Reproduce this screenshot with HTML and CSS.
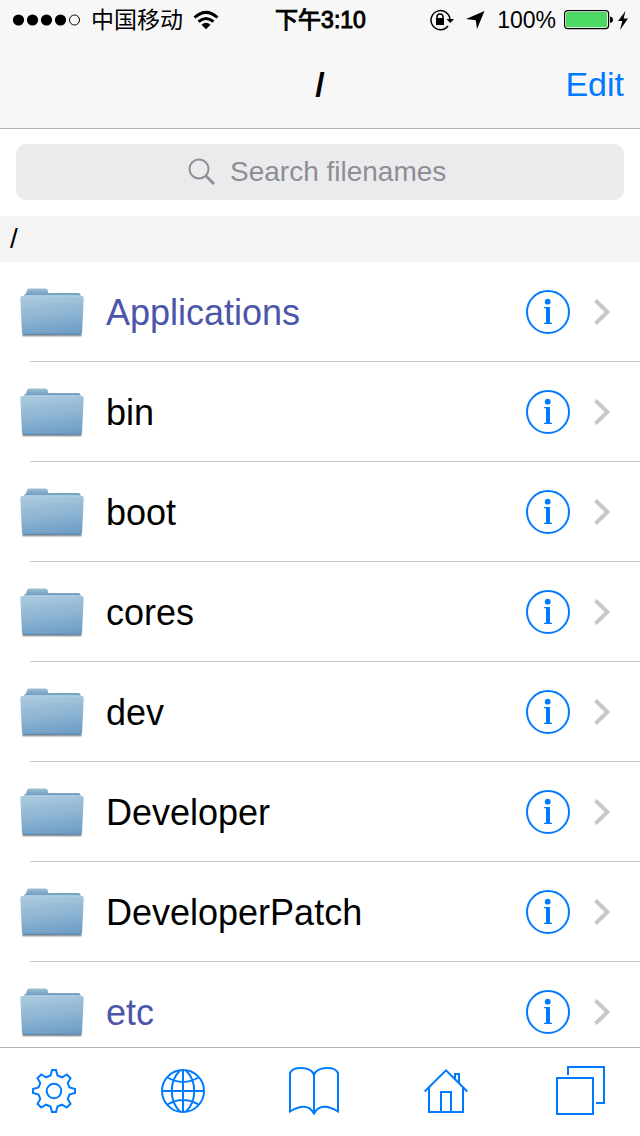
FILE: index.html
```html
<!DOCTYPE html>
<html lang="en">
<head>
<meta charset="utf-8">
<meta name="viewport" content="width=device-width">
<title>Files</title>
<link rel="stylesheet" href="styles.css">
</head>
<body>
<svg class="defs" aria-hidden="true">
  <defs>
    <linearGradient id="front" x1="0.3" y1="0" x2="0.5" y2="1">
      <stop offset="0" stop-color="#abcade"/>
      <stop offset="0.5" stop-color="#8fb5d3"/>
      <stop offset="1" stop-color="#6f9ec5"/>
    </linearGradient>
    <linearGradient id="back" x1="0" y1="0" x2="0" y2="1">
      <stop offset="0" stop-color="#9dbfd6"/>
      <stop offset="0.6" stop-color="#6d9cbd"/>
    </linearGradient>
  </defs>
  <symbol id="folder" viewBox="0 0 64 50">
    <path d="M2.500 47h59v2.500h-59z" fill="#8d8783" opacity=".8"/>
    <path d="M4 11V8l2-1.500 1-3.500q.5-1.500 2-1.500h16.500q2 0 2.300 2L28.300 6H59l1.500 1.500V13H4z" fill="url(#back)"/>
    <path d="M.3 11.500Q0 9 2 9h2l.5-1h55l.5 1h2q2 0 1.700 2.500L62 46q-.2 2-2 2H4q-1.800 0-2-2z" fill="url(#front)"/>
    <path d="M4 9.500h56" stroke="#b7d1e1" opacity=".5"/>
    <path d="M3 47.300h58" stroke="#5685aa"/>
  </symbol>
  <symbol id="info" viewBox="0 0 44 44">
    <circle cx="22" cy="22" r="21" fill="none" stroke="#007aff" stroke-width="2"/>
    <circle cx="21.700" cy="11.700" r="2.900" fill="#007aff"/>
    <path d="M18 17h6v15.700h2V34h-8v-1.300h2V18.300h-2z" fill="#007aff"/>
  </symbol>
  <symbol id="chevron" viewBox="0 0 16 26"><path d="M1.500 1.500 13.500 13l-12 11.500" fill="none" stroke="#c7c7cc" stroke-width="4"/></symbol>
</svg>

<div class="screen">
  <header class="top">
    <div class="status">
      <div class="status-left">
        <svg width="68" height="12" viewBox="0 0 68 12" aria-hidden="true"><circle cx="5.500" cy="6" r="5.600"/><circle cx="19.500" cy="6" r="5.600"/><circle cx="33.500" cy="6" r="5.600"/><circle cx="47.500" cy="6" r="5.600"/><circle cx="61.500" cy="6" r="5" fill="none" stroke="#000"/></svg>
        <span class="carrier" lang="zh">中国移动</span>
        <svg width="26" height="20" viewBox="0 0 26 20" aria-hidden="true"><g fill="none" stroke="#000" stroke-width="3"><path d="M1.500 7.500Q13-2.800 24.500 7.500"/><path d="M5.500 11.700q7.500-6.400 15 0"/></g><path d="m8.500 14.700 4.500 4.500 4.500-4.500q-4.500-3.800-9 0z"/></svg>
      </div>
      <span class="time" lang="zh">下午3:10</span>
      <div class="status-right">
        <svg width="24" height="22" viewBox="0 0 24 22" aria-hidden="true"><path d="M20 11A9.500 9.500 0 1 0 18 17" fill="none" stroke="#000" stroke-width="1.500"/><path d="M16.500 10h7.500l-3.700 4z"/><path d="M7 9.500V8a3 3 0 0 1 6 0v1.500" fill="none" stroke="#000" stroke-width="1.500"/><path d="M6 9h8v7H6z"/></svg>
        <svg class="arrow" width="19" height="18" viewBox="0 0 19 18" aria-hidden="true"><path d="M18.500 0 0 8l9.800 1.200L11 18z"/></svg>
        <span class="percent">100%</span>
        <svg width="50" height="20" viewBox="0 0 50 20" aria-hidden="true"><rect x=".6" y=".6" width="44" height="18" rx="3" fill="#fff" stroke="#000" stroke-width="1.200"/><rect x="2" y="2" width="41.200" height="15.200" rx="1.500" fill="#4cd964"/><path d="M46 6.500q3 .5 3 3.200t-3 3.200z"/></svg>
        <svg class="bolt" width="10" height="19" viewBox="0 0 10 19" aria-hidden="true"><path d="M7.500 0 0 10h4.300L2 19l8-11.500H5.600z"/></svg>
      </div>
    </div>
    <nav class="navbar">
      <h1 class="title">/</h1>
      <button class="edit" type="button">Edit</button>
    </nav>
  </header>

  <form class="search" role="search">
    <label class="search-box">
      <svg width="28" height="28" viewBox="0 0 28 28" aria-hidden="true"><g fill="none" stroke="#8e8e93"><circle cx="11" cy="11" r="9.500" stroke-width="2"/><path d="m18 18 8 8" stroke-width="2.800"/></g></svg>
      <input class="search-input" type="text" placeholder="Search filenames" aria-label="Search filenames">
    </label>
  </form>

  <h2 class="section">/</h2>

  <ul class="list">
    <li class="row"><svg class="folder"><use href="#folder"/></svg><a class="name linked" href="#">Applications</a><button class="info" type="button" aria-label="Info"><svg><use href="#info"/></svg></button><svg class="chevron"><use href="#chevron"/></svg></li>
    <li class="row"><svg class="folder"><use href="#folder"/></svg><a class="name" href="#">bin</a><button class="info" type="button" aria-label="Info"><svg><use href="#info"/></svg></button><svg class="chevron"><use href="#chevron"/></svg></li>
    <li class="row"><svg class="folder"><use href="#folder"/></svg><a class="name" href="#">boot</a><button class="info" type="button" aria-label="Info"><svg><use href="#info"/></svg></button><svg class="chevron"><use href="#chevron"/></svg></li>
    <li class="row"><svg class="folder"><use href="#folder"/></svg><a class="name" href="#">cores</a><button class="info" type="button" aria-label="Info"><svg><use href="#info"/></svg></button><svg class="chevron"><use href="#chevron"/></svg></li>
    <li class="row"><svg class="folder"><use href="#folder"/></svg><a class="name" href="#">dev</a><button class="info" type="button" aria-label="Info"><svg><use href="#info"/></svg></button><svg class="chevron"><use href="#chevron"/></svg></li>
    <li class="row"><svg class="folder"><use href="#folder"/></svg><a class="name" href="#">Developer</a><button class="info" type="button" aria-label="Info"><svg><use href="#info"/></svg></button><svg class="chevron"><use href="#chevron"/></svg></li>
    <li class="row"><svg class="folder"><use href="#folder"/></svg><a class="name" href="#">DeveloperPatch</a><button class="info" type="button" aria-label="Info"><svg><use href="#info"/></svg></button><svg class="chevron"><use href="#chevron"/></svg></li>
    <li class="row"><svg class="folder"><use href="#folder"/></svg><a class="name linked" href="#">etc</a><button class="info" type="button" aria-label="Info"><svg><use href="#info"/></svg></button><svg class="chevron"><use href="#chevron"/></svg></li>
  </ul>

  <footer class="toolbar">
    <button class="tool" type="button" aria-label="Settings"><svg width="44" height="44" viewBox="0 0 44 44"><path d="M20 1h4l1.500 5.500L30 8.300l4.800-2.800 3.700 3.700-2.800 4.800 1.800 4.500L43 20v4l-5.500 1.500-1.800 4.500 2.800 4.800-3.700 3.700-4.800-2.800-4.500 1.800L24 43h-4l-1.500-5.500-4.500-1.800-4.800 2.800-3.700-3.700L8.300 30l-1.800-4.500L1 24v-4l5.500-1.500L8.300 14 5.500 9.200l3.700-3.700L14 8.300l4.500-1.800z"/><circle cx="22" cy="22" r="7.300"/></svg></button>
    <button class="tool" type="button" aria-label="Network"><svg width="44" height="44" viewBox="0 0 44 44"><circle cx="22" cy="22" r="21"/><path d="M22 1v42M1 22h42M6.500 8.500Q22 17.500 37.500 8.500M6.500 35.500Q22 26.500 37.500 35.500M19 1.500C8 12 8 32 19 42.500M25 1.500C36 12 36 32 25 42.500"/></svg></button>
    <button class="tool" type="button" aria-label="Bookmarks"><svg width="50" height="48" viewBox="0 0 50 48"><path d="M25 47V8C22-1 4-1 1 6v38.500Q18 34 25 46.500 32 34 49 44.500V6C46-1 28-1 25 8"/></svg></button>
    <button class="tool" type="button" aria-label="Home"><svg width="48" height="44" viewBox="0 0 48 44"><path d="M.7 22.500 22 1.300l21.300 21.200M5 18.500V43h34V18.500M17 43V23h10v20M31 10V5h4v9"/></svg></button>
    <button class="tool" type="button" aria-label="Windows"><svg width="50" height="50" viewBox="0 0 50 50"><path d="M1 12h36v36H1zM12 9V1h36v36h-8"/></svg></button>
  </footer>
</div>
</body>
</html>
```
FILE: styles.css
```css
* { box-sizing: border-box; }

body {
  margin: 0;
  background: #fff;
  color: #000;
  font-family: "Liberation Sans", "Noto Sans CJK SC", sans-serif;
}

button {
  padding: 0;
  border: 0;
  background: none;
  font: inherit;
  cursor: pointer;
}

svg { display: block; flex: none; }

.defs { position: absolute; width: 0; height: 0; }

.screen {
  display: flex;
  flex-direction: column;
  height: 100vh;
}

.top {
  flex: none;
  background: #f7f7f7;
  border-bottom: 1px solid #b2b2b2;
}

.status {
  display: grid;
  grid-template-columns: 1fr auto 1fr;
  align-items: center;
  height: 40px;
  padding: 0 12px 0 13px;
  font-size: 23px;
  line-height: 40px;
}

.status-left, .status-right {
  display: flex;
  align-items: center;
  white-space: nowrap;
}

.status-left { gap: 10px; }
.status-right { justify-content: flex-end; gap: 8px; }
.arrow { margin: 0 4px; }
.bolt { margin-left: -4px; }
.time { -webkit-text-stroke: 1px #000; }

.navbar {
  display: grid;
  grid-template-columns: 1fr auto 1fr;
  align-items: center;
  height: 88px;
  padding: 0 16px;
  font-size: 34px;
}

.title {
  grid-column: 2;
  margin: 0;
  font-size: 34px;
  font-weight: bold;
}

.edit { justify-self: end; color: #007aff; }

.search { flex: none; padding: 15px 16px 16px; }

.search-box {
  display: flex;
  align-items: center;
  justify-content: center;
  gap: 14px;
  height: 56px;
  border-radius: 10px;
  background: #eaebed;
}

.search-input {
  width: 222px;
  padding: 0;
  border: 0;
  outline: 0;
  background: none;
  font: inherit;
  font-size: 28px;
}

.search-input::placeholder { color: #8e8e93; opacity: 1; }

.section {
  flex: none;
  margin: 0;
  padding: 0 10px;
  background: #f4f4f4;
  font-size: 28px;
  font-weight: normal;
  line-height: 46px;
}

.list {
  flex: 1;
  min-height: 0;
  margin: 0;
  padding: 0;
  overflow: hidden;
  list-style: none;
}

.row {
  display: flex;
  align-items: center;
  height: 100px;
  padding: 0 30px 0 20px;
  background: linear-gradient(#c8c7cc, #c8c7cc) 30px 100% / 100% 1px no-repeat;
}

.folder { width: 64px; height: 50px; }

.name {
  flex: 1;
  margin-left: 22px;
  padding-top: 2px;
  color: #000;
  font-size: 36px;
  text-decoration: none;
}

.linked { color: #4b55a9; }

.info svg { width: 44px; height: 44px; }
.chevron { width: 16px; height: 26px; margin-left: 24px; }

.toolbar {
  display: flex;
  flex: none;
  align-items: center;
  justify-content: space-between;
  height: 89px;
  padding: 0 34px 2px 32px;
  border-top: 1px solid #b2b2b2;
}

.tool svg { fill: none; stroke: #007aff; stroke-width: 2; overflow: visible; }
```
